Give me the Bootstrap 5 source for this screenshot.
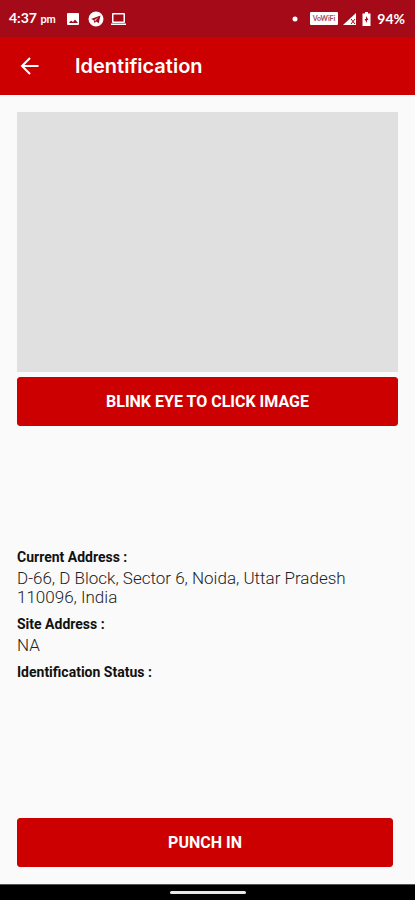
<!DOCTYPE html>
<html lang="en">
<head>
<meta charset="utf-8">
<meta name="viewport" content="width=device-width, initial-scale=1">
<title>Identification</title>
<link href="https://cdn.jsdelivr.net/npm/bootstrap@5.3.0/dist/css/bootstrap.min.css" rel="stylesheet">
<style>
  body { background: #fafafa; font-family: Roboto, sans-serif; color: #111; }
  .status-bar { background: #a50a18; height: 37px; padding: 0 10px 0 9px; font: 700 14px/20px Lato, sans-serif; }
  .status-bar small { font-size: 11px; }
  .status-left { gap: 10px; }
  .app-bar { background: #c00; height: 58px; padding: 0 18px; gap: 33px; }
  .app-bar h1 { font: 600 20px/28px Inter, sans-serif; }
  .content-area { padding: 17px; }
  .camera-view { background: #e0e0e0; height: 260px; margin-bottom: 5px; }
  .btn-action { --bs-btn-bg: #c00; --bs-btn-color: #fff; --bs-btn-border-color: #c00; --bs-btn-hover-bg: #b00000; --bs-btn-hover-color: #fff; --bs-btn-active-bg: #a00000; --bs-btn-active-color: #fff;
    --bs-btn-border-radius: 3px; height: 49px; font-size: 16px; font-weight: 700; }
  .details { margin: 121px 0 0; }
  .details dt { font-size: 14px; line-height: 20px; font-weight: 700; }
  .details dd { font-size: 17px; line-height: 19px; font-weight: 300; margin: 2px 0 7px; color: #222; }
  .punch-row { padding-right: 5px; }
  .gesture-bar { background: #000; height: 16px; border-top: 1px solid #555; }
  .gesture-pill { background: #e8e8e8; width: 76px; height: 3px; border-radius: 2px; }
</style>
<script src="https://cdn.jsdelivr.net/npm/bootstrap@5.3.0/dist/js/bootstrap.bundle.min.js"></script>
</head>
<body class="d-flex flex-column min-vh-100">
<div class="status-bar d-flex align-items-center justify-content-between text-white">
  <div class="status-left d-flex align-items-center">
    <span>4:37 <small>pm</small></span>
    <svg width="62" height="16" viewBox="0 0 62 16" fill="#fff" aria-hidden="true">
      <path fill-rule="evenodd" d="M2 2h10a1 1 0 0 1 1 1v10a1 1 0 0 1-1 1H2a1 1 0 0 1-1-1V3a1 1 0 0 1 1-1zM3 12h9L9 8.500 7 11 5 9.500z"/>
      <path fill-rule="evenodd" d="M30 .5a7.500 7.500 0 1 1 0 15 7.500 7.500 0 0 1 0-15zM25 8l2.500 1 1 3 1.700-1.500 2.500 1.700L34.500 4.500zM28.500 9l4-2.700-3 3.200-.5 1z"/>
      <path fill-rule="evenodd" d="M47 2h11a1 1 0 0 1 1 1v8a1 1 0 0 1-1 1H47a1 1 0 0 1-1-1V3a1 1 0 0 1 1-1zm.5 1.500v7h10v-7zM45 12.500h15V14H45z"/>
    </svg>
  </div>
  <div class="d-flex align-items-center">
    <svg class="me-1" width="81" height="16" viewBox="0 0 81 16" fill="#fff" aria-hidden="true">
      <circle cx="3" cy="8" r="2.500"/>
      <rect x="18" y="1" width="28" height="13" rx="1"/>
      <text x="32" y="10" font-size="7" text-anchor="middle" fill="#a84a55">VoWiFi</text>
      <path d="M51 14 64 2v12z"/>
      <path d="m59 8 4 5m-4 0 4-5" stroke="#a50a18" stroke-width="1"/>
      <path fill-rule="evenodd" d="M73 1h3v1.500h2.500V15h-8V2.500H73zM74 5v3h-1.500l2.500 4V9h1.500z"/>
    </svg>
    <span>94%</span>
  </div>
</div>
<header class="app-bar d-flex align-items-center text-white">
  <button type="button" class="btn p-0 border-0 text-white d-flex" aria-label="Back">
    <svg width="24" height="24" viewBox="0 0 24 24" fill="none" stroke="#fff" stroke-width="2" aria-hidden="true"><path d="M20.500 12H5M12 4l-8 8 8 8"/></svg>
  </button>
  <h1 class="m-0">Identification</h1>
</header>
<main class="content-area d-flex flex-column flex-grow-1">
  <div class="camera-view" role="img" aria-label="Camera preview"></div>
  <button type="button" class="btn btn-action w-100">BLINK EYE TO CLICK IMAGE</button>
  <dl class="details">
    <dt>Current Address :</dt>
    <dd>D-66, D Block, Sector 6, Noida, Uttar Pradesh 110096, India</dd>
    <dt>Site Address :</dt>
    <dd>NA</dd>
    <dt>Identification Status :</dt>
  </dl>
  <div class="punch-row mt-auto">
    <button type="button" class="btn btn-action w-100">PUNCH IN</button>
  </div>
</main>
<footer class="gesture-bar d-flex align-items-center justify-content-center"><div class="gesture-pill"></div></footer>
</body>
</html>
